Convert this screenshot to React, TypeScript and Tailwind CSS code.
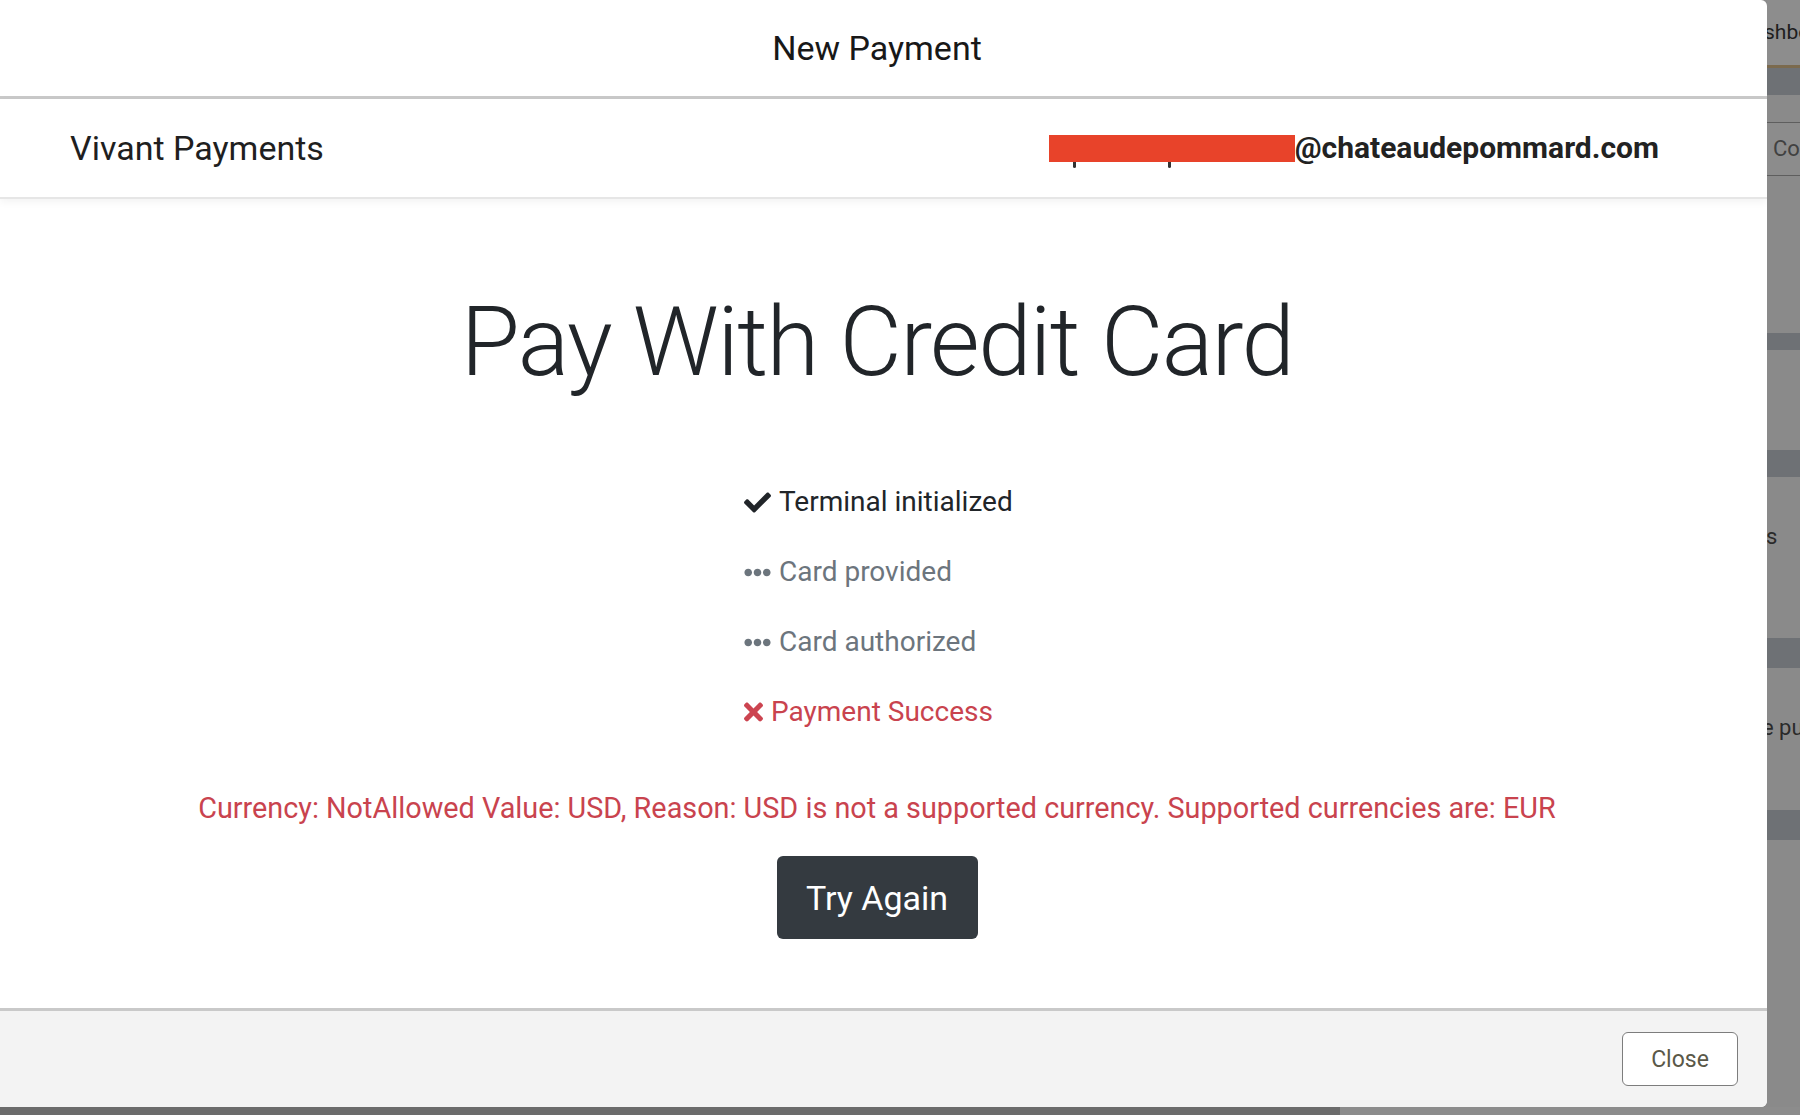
import React from "react";
import { FaCheck, FaEllipsisH, FaTimes } from "react-icons/fa";

export default function App() {
  const font = { fontFamily: "Roboto, 'Liberation Sans', Arial, sans-serif" };
  return (
    <div className="w-[1800px] h-[1115px] overflow-hidden flex flex-col bg-[#8a8a8a]" style={font}>
      <div className="flex h-[1107px]">
        {/* Modal */}
        <div className="w-[1767px] flex flex-col bg-white rounded-r-[6px] overflow-hidden">
          <div className="h-[99px] border-b-[3px] border-[#c9c9c9] flex items-center justify-center pr-[13px]">
            <span className="text-[34px] leading-none text-[#181818]">New Payment</span>
          </div>
          <div className="relative z-10 h-[100px] border-b-2 border-[#e6e6e6] shadow-[0_3px_8px_rgba(0,0,0,0.05)] flex items-center justify-between pl-[70px] pr-[108px]">
            <span className="text-[34px] leading-none text-[#1f1f1f]">Vivant Payments</span>
            <div className="flex items-center">
              <div className="relative w-[246px] h-[27px] bg-[#e8432a]">
                <span className="absolute left-[24px] top-[27px] w-[3px] h-[6px] bg-[#333] rounded-b" />
                <span className="absolute left-[119px] top-[27px] w-[3px] h-[6px] bg-[#333] rounded-b" />
              </div>
              <span className="text-[30px] leading-none font-bold text-[#222]">@chateaudepommard.com</span>
            </div>
          </div>
          <div className="flex-1 flex flex-col items-center pr-[13px] pt-[86px]">
            <h1 className="text-[96px] leading-[115px] font-light text-[#212529] tracking-[-1.6px] whitespace-nowrap">Pay With Credit Card</h1>
            <div className="w-[266px] mt-[81px] flex flex-col gap-[28px] whitespace-nowrap">
              <div className="flex items-center h-[42px] text-[28px] text-[#212529]">
                <FaCheck className="w-[27px] h-[27px] shrink-0 text-[#212529]" />
                <span className="ml-[8px]">Terminal initialized</span>
              </div>
              <div className="flex items-center h-[42px] text-[28px] text-[#6c757d]">
                <FaEllipsisH className="w-[27px] h-[27px] shrink-0 text-[#6c757d]" />
                <span className="ml-[8px]">Card provided</span>
              </div>
              <div className="flex items-center h-[42px] text-[28px] text-[#6c757d]">
                <FaEllipsisH className="w-[27px] h-[27px] shrink-0 text-[#6c757d]" />
                <span className="ml-[8px]">Card authorized</span>
              </div>
              <div className="flex items-center h-[42px] text-[28px] text-[#c9434e]">
                <FaTimes className="w-[19px] h-[28px] shrink-0 text-[#cc4450]" />
                <span className="ml-[8px]">Payment Success</span>
              </div>
            </div>
            <p className="mt-[54px] text-[28.8px] leading-[42px] text-[#c9434e] whitespace-nowrap">
              Currency: NotAllowed Value: USD, Reason: USD is not a supported currency. Supported currencies are: EUR
            </p>
            <button className="mt-[27px] w-[201px] h-[83px] rounded-[6px] bg-[#343a40] text-white text-[34px] leading-none">
              Try Again
            </button>
          </div>
          <div className="h-[99px] border-t-[3px] border-[#c9c9c9] bg-[#f3f3f3] flex items-center justify-end pr-[29px]">
            <button className="w-[116px] h-[54px] rounded-[6px] border-[1.5px] border-[#7d7d7d] bg-white text-[23px] leading-none text-[#5a5848]">
              Close
            </button>
          </div>
        </div>
        {/* Backdrop strip */}
        <div className="flex-1 overflow-hidden flex flex-col text-[#2a2a2a] whitespace-nowrap">
          <div className="h-[65px] bg-[#8d8d8d] flex items-center">
            <span className="ml-[-3px] text-[21px] leading-none text-[#1e1e1e]">shbo</span>
          </div>
          <div className="h-[3px] bg-[#7b6a4e]" />
          <div className="h-[27px] bg-[#6e7175]" />
          <div className="h-[27px] bg-[#8a8a8a]" />
          <div className="h-[54px] border-y border-[#5e5e5e] bg-[#8c8c8c] flex items-center">
            <span className="ml-[6px] text-[22px] leading-none text-[#414141]">Co</span>
          </div>
          <div className="h-[157px] bg-[#8a8a8a]" />
          <div className="h-[17px] bg-[#6e7175]" />
          <div className="h-[100px] bg-[#8a8a8a]" />
          <div className="h-[27px] bg-[#6e7175]" />
          <div className="h-[161px] bg-[#8a8a8a] pt-[48px]">
            <div className="text-[22px] leading-[24px] ml-[-1px]">s</div>
          </div>
          <div className="h-[30px] bg-[#6e7175]" />
          <div className="h-[142px] bg-[#8a8a8a] pt-[48px]">
            <div className="text-[22px] leading-[24px] ml-[-5px]">e pu</div>
          </div>
          <div className="h-[30px] bg-[#6e7175]" />
          <div className="flex-1 bg-[#8a8a8a]" />
        </div>
      </div>
      <div className="h-[8px] flex">
        <div className="w-[1340px] bg-[#6b6b6b]" />
        <div className="flex-1 bg-[#8c8c8c]" />
      </div>
    </div>
  );
}
